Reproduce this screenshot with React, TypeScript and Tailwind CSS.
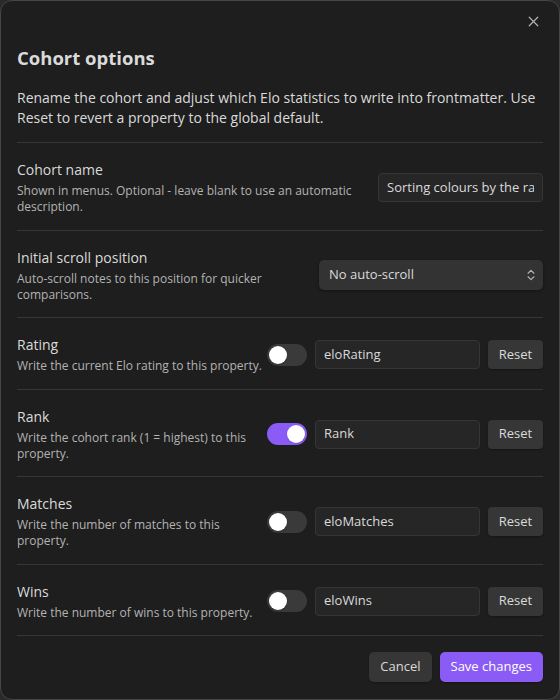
import type { ReactNode } from 'react'
import { ChevronsUpDown, X } from 'lucide-react'

interface SettingRowProps {
  name: string
  desc: string[]
  children: ReactNode
}

function SettingRow({ name, desc, children }: SettingRowProps) {
  return (
    <div className="flex items-center gap-4 border-b border-[#363636] pt-[17px] pb-[14.5px]">
      <div className="min-w-0 flex-1">
        <div className="text-[14px] leading-[20px] text-[#dadada]">{name}</div>
        <div className="mt-[3px] text-[12px] leading-[16px] text-[#b3b3b3]">
          {desc.map((line) => (
            <div key={line} className="whitespace-nowrap">
              {line}
            </div>
          ))}
        </div>
      </div>
      <div className="flex shrink-0 items-center gap-2">{children}</div>
    </div>
  )
}

function Toggle({ on }: { on: boolean }) {
  return (
    <div
      className={`flex h-[22px] w-[40px] items-center rounded-full px-[2px] ${
        on ? 'justify-end bg-[#8a5cf5]' : 'justify-start bg-[#3a3a3a]'
      }`}
    >
      <div className="h-[18px] w-[18px] rounded-full bg-white shadow-sm" />
    </div>
  )
}

function TextField({ value, width }: { value: string; width: string }) {
  return (
    <div
      className={`flex h-[29px] ${width} items-center rounded-[4px] border border-[#363636] bg-[#262626] px-[8px] text-[13px] text-[#dadada]`}
    >
      <span className="overflow-hidden whitespace-nowrap">{value}</span>
    </div>
  )
}

function PropertyRow({ name, desc, on, value }: { name: string; desc: string[]; on: boolean; value: string }) {
  return (
    <SettingRow name={name} desc={desc}>
      <Toggle on={on} />
      <TextField value={value} width="w-[165px]" />
      <button className="h-[29px] w-[55px] rounded-[4px] bg-[#363636] text-[13px] text-[#dadada] shadow-[0_1px_2px_rgba(0,0,0,0.3)]">
        Reset
      </button>
    </SettingRow>
  )
}

export default function App() {
  return (
    <div className="h-[700px] w-[560px] bg-[#2a2a2a] font-['Open_Sans',sans-serif]">
      <div className="relative box-border flex h-[700px] w-[560px] flex-col rounded-[12px] border border-[#454545] bg-[#1e1e1e] px-4">
        <button className="absolute top-[12px] right-[17px] text-[#b3b3b3]">
          <X size={17} strokeWidth={1.7} />
        </button>

        <h1 className="pt-[44px] text-[18.5px] leading-[26px] font-bold text-[#dadada]">Cohort options</h1>
        <p className="mt-[17px] border-b border-[#363636] pb-[15px] text-[14px] leading-[19.5px] text-[#dadada]">
          Rename the cohort and adjust which Elo statistics to write into frontmatter. Use Reset to revert a
          property to the global default.
        </p>

        <SettingRow name="Cohort name" desc={['Shown in menus. Optional - leave blank to use an automatic', 'description.']}>
          <TextField value="Sorting colours by the rainbow" width="w-[165px]" />
        </SettingRow>

        <SettingRow name="Initial scroll position" desc={['Auto-scroll notes to this position for quicker', 'comparisons.']}>
          <div className="flex h-[30px] w-[224px] items-center justify-between rounded-[5px] bg-[#333333] pr-[5px] pl-[10px] text-[13px] text-[#dadada] shadow-[0_1px_3px_rgba(0,0,0,0.35)]">
            <span>No auto-scroll</span>
            <ChevronsUpDown size={14} strokeWidth={2} className="text-[#b3b3b3]" />
          </div>
        </SettingRow>

        <PropertyRow name="Rating" desc={['Write the current Elo rating to this property.']} on={false} value="eloRating" />
        <PropertyRow name="Rank" desc={['Write the cohort rank (1 = highest) to this', 'property.']} on value="Rank" />
        <PropertyRow
          name="Matches"
          desc={['Write the number of matches to this', 'property.']}
          on={false}
          value="eloMatches"
        />
        <PropertyRow name="Wins" desc={['Write the number of wins to this property.']} on={false} value="eloWins" />

        <div className="flex justify-end gap-2 pt-[16px]">
          <button className="h-[30px] rounded-[5px] bg-[#363636] px-[11px] text-[13px] text-[#dadada] shadow-[0_1px_2px_rgba(0,0,0,0.3)]">
            Cancel
          </button>
          <button className="h-[30px] rounded-[5px] bg-[#8a5cf5] px-[11px] text-[13px] text-white shadow-[0_1px_2px_rgba(0,0,0,0.3)]">
            Save changes
          </button>
        </div>
      </div>
    </div>
  )
}
